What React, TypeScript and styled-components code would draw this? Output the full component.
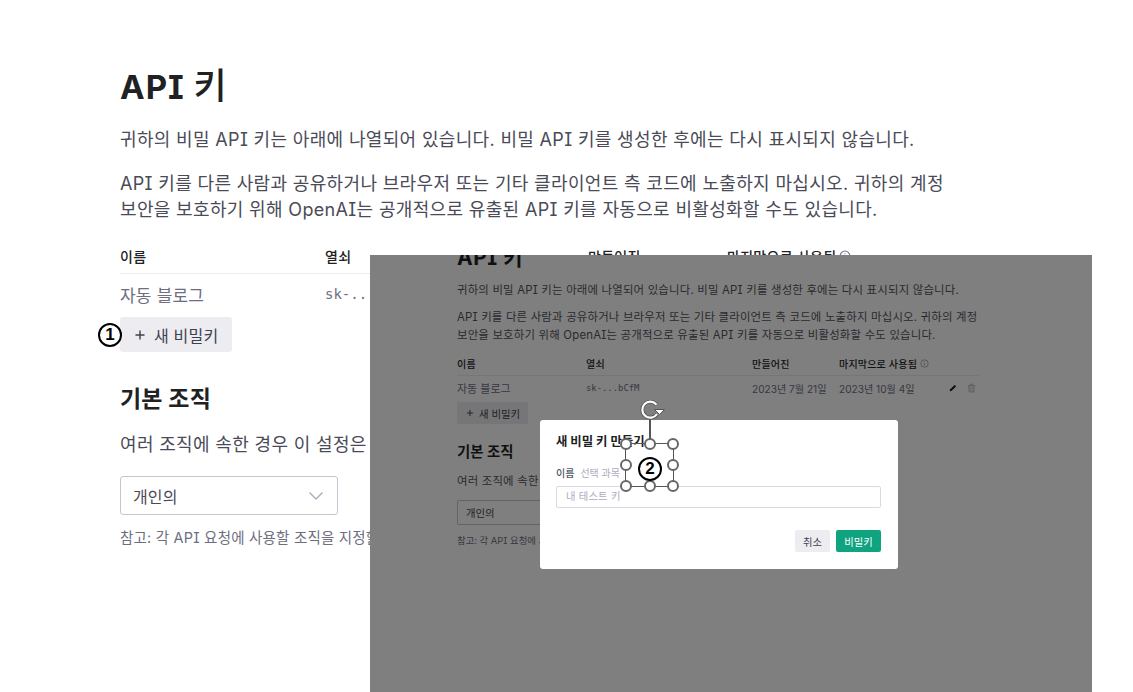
import React from "react";
import styled, { createGlobalStyle } from "styled-components";

const GlobalStyle = createGlobalStyle`
  html, body {
    margin: 0;
    background: #fff;
  }
  * {
    box-sizing: border-box;
  }
`;

const FONT = `"Inter", "Noto Sans CJK KR", sans-serif`;

const Page = styled.div`
  position: relative;
  width: 1133px;
  height: 692px;
  overflow: hidden;
  background: #fff;
  font-family: ${FONT};
  font-feature-settings: "cv08";
  color: #353740;
`;

const Content = styled.main`
  width: 826px;
  margin-left: 120px;
  padding-top: 64px;
`;

const Title = styled.h1`
  margin: 0;
  font-size: 33px;
  line-height: 44px;
  font-weight: 700;
  letter-spacing: 1px;
  color: #202123;
`;

const TitleKey = styled.span`
  font-size: 36px;
  font-weight: 500;
  line-height: 44px;
`;

const Para = styled.p`
  margin: 18px 0 0;
  font-size: 18px;
  line-height: 26px;
  letter-spacing: 0.34px;
  color: #4a4b57;
  white-space: nowrap;
`;

const TableHead = styled.div`
  display: grid;
  grid-template-columns: 205px 263px 139px 1fr;
  margin-top: 18px;
  height: 33px;
  padding-bottom: 3px;
  align-items: center;
  border-bottom: 1px solid #ececf1;
  font-size: 14px;
  font-weight: 500;
  letter-spacing: 0.3px;
  color: #202123;
`;

const TableRow = styled.div`
  display: grid;
  grid-template-columns: 205px 263px 139px 1fr;
  height: 40px;
  align-items: center;
  font-size: 17px;
  color: #6e6e80;
`;

const RowName = styled.span`
  letter-spacing: 0.2px;
`;

const Mono = styled.span`
  font-family: "DejaVu Sans Mono", monospace;
  font-size: 14px;
`;

const AddButton = styled.button`
  display: flex;
  align-items: center;
  gap: 8px;
  width: 112px;
  height: 35px;
  margin-top: 3px;
  padding: 0 0 0 14px;
  border: 0;
  border-radius: 3px;
  background: #ececf1;
  font-family: inherit;
  font-size: 16px;
  letter-spacing: 0.2px;
  color: #40414f;
`;

const SubTitle = styled.h2`
  margin: 33px 0 0;
  font-size: 23px;
  line-height: 29px;
  font-weight: 700;
  letter-spacing: 0.2px;
  color: #202123;
`;

const SelectBox = styled.div`
  display: flex;
  align-items: center;
  justify-content: space-between;
  width: 218px;
  height: 39px;
  margin-top: 18px;
  padding: 0 13px 0 12px;
  border: 1px solid #c5c5d2;
  border-radius: 3px;
  font-size: 16px;
  letter-spacing: 0.1px;
  color: #4a4b57;
`;

const Note = styled.p`
  margin: 13px 0 0;
  font-size: 14.5px;
  line-height: 20px;
  letter-spacing: 0.2px;
  color: #6e6e80;
  white-space: nowrap;
`;

/* the screenshot pasted over the page */
const Shot = styled.section`
  position: absolute;
  left: 370px;
  top: 255px;
  width: 722px;
  height: 437px;
  overflow: hidden;
  background: #7f7f7f;
  padding: 0 113px 0 87px;
  color: #1c1c20;
`;

const ShotTitle = styled.h1`
  margin: -11px 0 0;
  font-size: 21px;
  line-height: 28px;
  font-weight: 700;
  letter-spacing: 0.5px;
  color: #101012;
`;

const ShotPara = styled.p`
  margin: 9px 0 0;
  font-size: 11.4px;
  line-height: 18px;
  letter-spacing: 0.2px;
  white-space: nowrap;
  color: #2a2a2e;
`;

const ShotHead = styled.div`
  display: grid;
  grid-template-columns: 129px 166px 87px 1fr;
  height: 22px;
  margin-top: 10px;
  padding-bottom: 2px;
  align-items: center;
  border-bottom: 1px solid #767678;
  font-size: 10px;
  font-weight: 500;
  letter-spacing: 0.2px;
  color: #101012;
`;

const ShotRow = styled.div`
  display: grid;
  grid-template-columns: 129px 166px 87px 110px 1fr;
  height: 24px;
  align-items: center;
  font-size: 10.1px;
  color: #37373f;
`;

const ShotName = styled.span`
  font-size: 11px;
`;

const ShotMono = styled.span`
  font-family: "DejaVu Sans Mono", monospace;
  font-size: 8.9px;
`;

const HeadLabel = styled.span`
  display: inline-flex;
  align-items: center;
  gap: 3px;
`;

const ShotIcons = styled.span`
  display: flex;
  align-items: center;
  gap: 10px;
`;

const ShotAdd = styled.div`
  display: flex;
  align-items: center;
  gap: 5px;
  width: 71px;
  height: 22px;
  margin-top: 2px;
  padding-left: 9px;
  border-radius: 2px;
  background: #767678;
  font-size: 10.4px;
  color: #202024;
`;

const ShotSub = styled.h2`
  margin: 17px 0 0;
  font-size: 14.4px;
  line-height: 22px;
  font-weight: 700;
  color: #101012;
`;

const ShotSelect = styled.div`
  display: flex;
  align-items: center;
  width: 180px;
  height: 25px;
  margin-top: 10px;
  padding-left: 8px;
  border: 1px solid #646468;
  border-radius: 2px;
  font-size: 10.4px;
  color: #1e1e22;
`;

const ShotNote = styled.p`
  margin: 9px 0 0;
  font-size: 9.4px;
  line-height: 14px;
  white-space: nowrap;
  color: #37373f;
`;

const Dialog = styled.div`
  position: absolute;
  left: 170px;
  top: 165px;
  width: 358px;
  height: 149px;
  padding: 13px 17px 13px 16px;
  border-radius: 3px;
  background: #fff;
  color: #353740;
`;

const DialogTitle = styled.h3`
  margin: 0;
  font-size: 12.4px;
  line-height: 17px;
  font-weight: 700;
  color: #202123;
`;

const DialogLabel = styled.div`
  display: flex;
  gap: 6px;
  margin-top: 17px;
  font-size: 10px;
  line-height: 12px;
  color: #acacbe;
`;

const DialogLabelName = styled.span`
  font-weight: 500;
  color: #565869;
`;

const DialogInput = styled.div`
  height: 22px;
  margin-top: 7px;
  padding-left: 9px;
  border: 1px solid #d9d9e3;
  border-radius: 2px;
  font-size: 10.3px;
  line-height: 19px;
  letter-spacing: 0.2px;
  color: #acacbe;
`;

const DialogActions = styled.div`
  display: flex;
  justify-content: flex-end;
  gap: 6px;
  margin-top: 22px;
`;

const DialogButton = styled.div<{ $primary?: boolean }>`
  display: flex;
  align-items: center;
  justify-content: center;
  width: ${(p) => (p.$primary ? 45 : 35)}px;
  height: 22px;
  border-radius: 2px;
  font-size: 10.3px;
  background: ${(p) => (p.$primary ? "#10a37f" : "#ececf1")};
  color: ${(p) => (p.$primary ? "#fff" : "#40414f")};
`;

/* annotations drawn on top */
const Badge = styled.span<{ $x: number; $y: number }>`
  position: absolute;
  left: ${(p) => p.$x}px;
  top: ${(p) => p.$y}px;
  display: flex;
  align-items: center;
  justify-content: center;
  width: 24px;
  height: 24px;
  border: 2.6px solid #000;
  border-radius: 50%;
  background: #fff;
  font-family: "Liberation Sans", sans-serif;
  font-size: 17px;
  font-weight: 700;
  color: #000;
`;

const Frame = styled.div`
  position: absolute;
  left: 625px;
  top: 443px;
  width: 49px;
  height: 44px;
  border: 1.5px solid #555;
`;

const Stem = styled.div`
  position: absolute;
  left: 649px;
  top: 418px;
  width: 1.5px;
  height: 26px;
  background: #555;
`;

const Handle = styled.span<{ $x: number; $y: number }>`
  position: absolute;
  left: ${(p) => p.$x}%;
  top: ${(p) => p.$y}%;
  width: 12px;
  height: 12px;
  margin: -6px 0 0 -6px;
  border: 2px solid #666;
  border-radius: 50%;
  background: #fff;
`;

const RotateIcon = styled.svg`
  position: absolute;
  left: 640px;
  top: 400px;
`;

const PLACES = [
  [0, 0],
  [50, 0],
  [100, 0],
  [0, 50],
  [100, 50],
  [0, 100],
  [50, 100],
  [100, 100],
];

const Plus = ({ size, color }: { size: number; color: string }) => (
  <svg width={size} height={size} viewBox="0 0 12 12" fill="none">
    <path d="M6 1.5v9M1.5 6h9" stroke={color} strokeWidth="1.4" />
  </svg>
);

const Chevron = () => (
  <svg width="16" height="10" viewBox="0 0 16 10" fill="none">
    <path d="M1.5 1.5 8 8l6.5-6.5" stroke="#acacbe" strokeWidth="1.4" />
  </svg>
);

const InfoIcon = ({ size, color }: { size: number; color: string }) => (
  <svg width={size} height={size} viewBox="0 0 9 9" fill="none">
    <circle cx="4.5" cy="4.5" r="3.7" stroke={color} strokeWidth="0.8" />
    <path d="M4.5 4v2.4M4.5 2.4v.8" stroke={color} strokeWidth="0.8" />
  </svg>
);

const PencilIcon = () => (
  <svg width="8" height="8" viewBox="0 0 9 9">
    <path d="M0.8 8.2 1.4 6 6.4 1l1.6 1.6-5 5z" fill="#0c0c0e" />
  </svg>
);

const TrashIcon = () => (
  <svg width="9" height="10" viewBox="0 0 9 10" fill="none">
    <path
      d="M1 2.5h7M3.2 2.5V1.2h2.6v1.3M1.8 2.5l.4 6.5h4.6l.4-6.5z"
      fill="#737375"
      stroke="#626266"
      strokeWidth="1"
    />
  </svg>
);

export default function App() {
  return (
    <Page>
      <GlobalStyle />
      <Content>
        <Title>
          API <TitleKey>키</TitleKey>
        </Title>
        <Para>귀하의 비밀 API 키는 아래에 나열되어 있습니다. 비밀 API 키를 생성한 후에는 다시 표시되지 않습니다.</Para>
        <Para>
          API 키를 다른 사람과 공유하거나 브라우저 또는 기타 클라이언트 측 코드에 노출하지 마십시오. 귀하의 계정
          <br />
          보안을 보호하기 위해 OpenAI는 공개적으로 유출된 API 키를 자동으로 비활성화할 수도 있습니다.
        </Para>
        <TableHead>
          <span>이름</span>
          <span>열쇠</span>
          <span>만들어진</span>
          <HeadLabel>
            마지막으로 사용됨 <InfoIcon size={12} color="#6e6e80" />
          </HeadLabel>
        </TableHead>
        <TableRow>
          <RowName>자동 블로그</RowName>
          <Mono>sk-...bCfM</Mono>
          <span>2023년 7월 21일</span>
          <span>2023년 10월 4일</span>
        </TableRow>
        <AddButton>
          <Plus size={12} color="#40414f" />새 비밀키
        </AddButton>
        <SubTitle>기본 조직</SubTitle>
        <Para>여러 조직에 속한 경우 이 설정은 기본적으로 API 요청에 사용되는 조직을 제어합니다.</Para>
        <SelectBox>
          개인의
          <Chevron />
        </SelectBox>
        <Note>참고: 각 API 요청에 사용할 조직을 지정할 수도 있습니다.</Note>
      </Content>

      <Shot>
        <ShotTitle>API 키</ShotTitle>
        <ShotPara>귀하의 비밀 API 키는 아래에 나열되어 있습니다. 비밀 API 키를 생성한 후에는 다시 표시되지 않습니다.</ShotPara>
        <ShotPara>
          API 키를 다른 사람과 공유하거나 브라우저 또는 기타 클라이언트 측 코드에 노출하지 마십시오. 귀하의 계정
          <br />
          보안을 보호하기 위해 OpenAI는 공개적으로 유출된 API 키를 자동으로 비활성화할 수도 있습니다.
        </ShotPara>
        <ShotHead>
          <span>이름</span>
          <span>열쇠</span>
          <span>만들어진</span>
          <HeadLabel>
            마지막으로 사용됨 <InfoIcon size={9} color="#505054" />
          </HeadLabel>
        </ShotHead>
        <ShotRow>
          <ShotName>자동 블로그</ShotName>
          <ShotMono>sk-...bCfM</ShotMono>
          <span>2023년 7월 21일</span>
          <span>2023년 10월 4일</span>
          <ShotIcons>
            <PencilIcon />
            <TrashIcon />
          </ShotIcons>
        </ShotRow>
        <ShotAdd>
          <Plus size={8} color="#202024" />새 비밀키
        </ShotAdd>
        <ShotSub>기본 조직</ShotSub>
        <ShotPara>여러 조직에 속한 경우 이 설정은 기본적으로 API 요청에 사용되는 조직을 제어합니다.</ShotPara>
        <ShotSelect>개인의</ShotSelect>
        <ShotNote>참고: 각 API 요청에 사용할 조직을 지정할 수도 있습니다.</ShotNote>
        <Dialog>
          <DialogTitle>새 비밀 키 만들기</DialogTitle>
          <DialogLabel>
            <DialogLabelName>이름</DialogLabelName>
            선택 과목
          </DialogLabel>
          <DialogInput>내 테스트 키</DialogInput>
          <DialogActions>
            <DialogButton>취소</DialogButton>
            <DialogButton $primary>비밀키</DialogButton>
          </DialogActions>
        </Dialog>
      </Shot>

      <Badge $x={98} $y={323}>1</Badge>
      <Stem />
      <RotateIcon width="28" height="20" viewBox="0 0 28 20" fill="none">
        <path d="M17 14a8 8 0 1 1-.5-9.4" stroke="#555" strokeWidth="3.6" />
        <path d="M17 14a8 8 0 1 1-.5-9.4" stroke="#fff" strokeWidth="2.2" />
        <path d="M14.5 9.5h10l-5 5z" fill="#fff" stroke="#555" strokeWidth="1" />
      </RotateIcon>
      <Frame>
        {PLACES.map(([x, y]) => (
          <Handle key={`${x}-${y}`} $x={x} $y={y} />
        ))}
      </Frame>
      <Badge $x={638} $y={457}>2</Badge>
    </Page>
  );
}
